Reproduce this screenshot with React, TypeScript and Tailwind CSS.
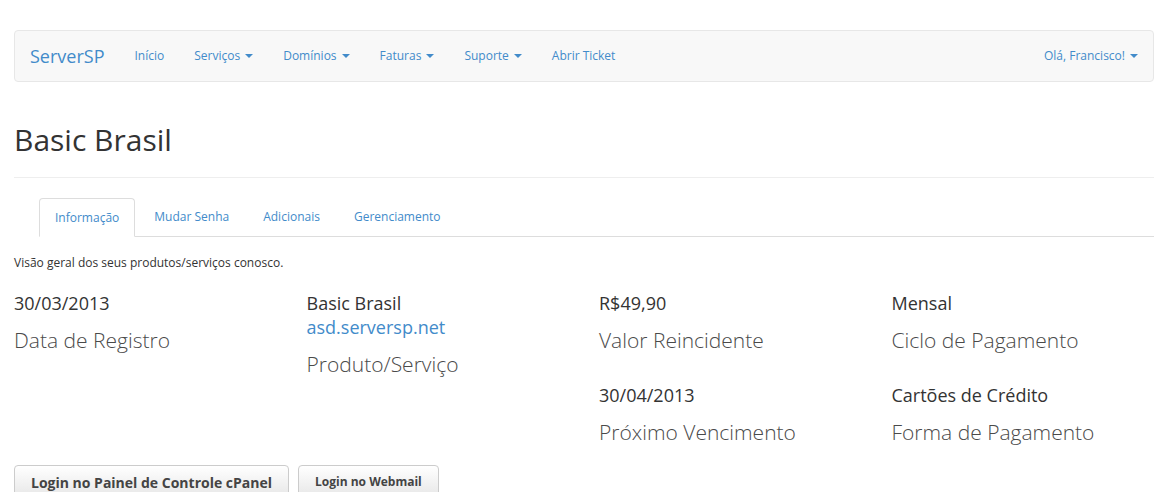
import React from "react";

const Caret = () => (
  <span className="inline-block ml-[5px] align-middle w-0 h-0 border-l-[4px] border-r-[4px] border-t-[4px] border-l-transparent border-r-transparent border-t-[#428bca]" />
);

const Item = ({ value, label, link }: { value: string; label: string; link?: string }) => (
  <div className="mb-[28px]">
    <div className="text-[18px] leading-[24px] text-[#333]">{value}</div>
    {link && <div className="text-[18px] leading-[24px] text-[#428bca]">{link}</div>}
    <div className="text-[21px] leading-[30px] font-light text-[#4a4a4a] mt-[10px]">{label}</div>
  </div>
);

export default function App() {
  const links = [
    { t: "Início" },
    { t: "Serviços", c: true },
    { t: "Domínios", c: true },
    { t: "Faturas", c: true },
    { t: "Suporte", c: true },
    { t: "Abrir Ticket" },
  ];
  return (
    <div className="bg-white min-h-[492px] pl-[14px] pr-[11px] pt-[30px] text-[#333]" style={{ fontFamily: '"Open Sans", "Liberation Sans", sans-serif' }}>
      <nav className="h-[52px] bg-[#f8f8f8] border border-[#e7e7e7] rounded-[4px] flex items-center">
        <span className="pl-[15px] pr-[15px] text-[18px] text-[#428bca]">ServerSP</span>
        {links.map((l) => (
          <span key={l.t} className="px-[15px] text-[12px] text-[#428bca] flex items-center">
            {l.t}
            {l.c && <Caret />}
          </span>
        ))}
        <span className="ml-auto pr-[15px] text-[12px] text-[#428bca] flex items-center">
          Olá, Francisco!
          <Caret />
        </span>
      </nav>

      <h1 className="mt-[40px] text-[30px] leading-[36px] font-normal text-[#333]">Basic Brasil</h1>
      <div className="mt-[19px] border-t border-[#eee]" />

      <div className="mt-[20px] ml-[25px] flex border-b border-[#ddd] h-[39px]">
        <div className="px-[15px] h-[39px] flex items-center bg-white border border-[#ddd] border-b-white rounded-t-[4px] text-[12px] text-[#428bca] mr-[2px]">
          Informação
        </div>
        {["Mudar Senha", "Adicionais", "Gerenciamento"].map((t) => (
          <div key={t} className="px-[17px] h-[38px] flex items-center text-[12px] text-[#428bca]">
            {t}
          </div>
        ))}
      </div>

      <p className="mt-[18px] text-[12px] leading-[16px] text-[#333]">Visão geral dos seus produtos/serviços conosco.</p>

      <div className="mt-[20px] grid grid-cols-[292.5px_292.5px_292.5px_1fr]">
        <div>
          <Item value="30/03/2013" label="Data de Registro" />
        </div>
        <div>
          <Item value="Basic Brasil" link="asd.serversp.net" label="Produto/Serviço" />
        </div>
        <div>
          <Item value="R$49,90" label="Valor Reincidente" />
          <Item value="30/04/2013" label="Próximo Vencimento" />
        </div>
        <div>
          <Item value="Mensal" label="Ciclo de Pagamento" />
          <Item value="Cartões de Crédito" label="Forma de Pagamento" />
        </div>
      </div>

      <div className="flex gap-[9px] -mt-[10px]">
        <button className="h-[34px] px-[16px] border border-[#ccc] rounded-[4px] bg-gradient-to-b from-white to-[#e6e6e6] text-[14px] font-bold text-[#444]">
          Login no Painel de Controle cPanel
        </button>
        <button className="h-[34px] px-[16px] border border-[#ccc] rounded-[4px] bg-gradient-to-b from-white to-[#e6e6e6] text-[12px] font-bold text-[#444]">
          Login no Webmail
        </button>
      </div>
    </div>
  );
}
